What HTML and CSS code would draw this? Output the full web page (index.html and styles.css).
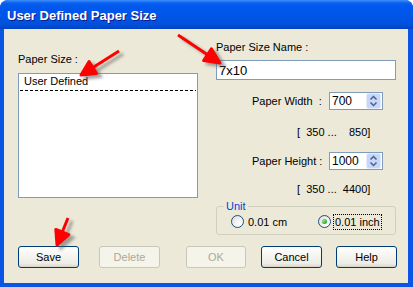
FILE: index.html
```html
<!DOCTYPE html>
<html lang="en">
  <head>
    <meta charset="UTF-8" />
    <title>User Defined Paper Size</title>
    <link rel="stylesheet" href="styles.css">
  </head>
  <body>
    <div class="window">
      <div class="titlebar">
        <span class="title">User Defined Paper Size</span>
      </div>

      <div class="client">
        <div class="panes">
          <!-- Left: list of paper sizes -->
          <div class="left-pane">
            <div class="label">Paper Size :</div>
            <div class="listbox">
              <div class="list-item">User Defined</div>
            </div>
          </div>

          <!-- Right: name, dimensions, unit -->
          <div class="right-pane">
            <div class="label">Paper Size Name :</div>
            <div class="textbox">7x10</div>

            <div class="field-row">
              <span class="field-label">Paper Width&nbsp; :</span>
              <div class="spinbox">
                <span class="spin-value">700</span>
                <svg class="spin-btn" width="15" height="16" viewBox="0 0 15 16">
                  <rect x="0.5" y="0.5" width="14" height="15" rx="2" fill="#c6d6fc" stroke="#e4ecfe" />
                  <path d="M4.5 6.5 L7.5 3.5 L10.5 6.5" fill="none" stroke="#4d6185" stroke-width="1.5" />
                  <path d="M4.5 9.5 L7.5 12.5 L10.5 9.5" fill="none" stroke="#4d6185" stroke-width="1.5" />
                </svg>
              </div>
            </div>
            <div class="range">[  350 ...    850]</div>

            <div class="field-row field-row-second">
              <span class="field-label">Paper Height :</span>
              <div class="spinbox">
                <span class="spin-value">1000</span>
                <svg class="spin-btn" width="15" height="16" viewBox="0 0 15 16">
                  <rect x="0.5" y="0.5" width="14" height="15" rx="2" fill="#c6d6fc" stroke="#e4ecfe" />
                  <path d="M4.5 6.5 L7.5 3.5 L10.5 6.5" fill="none" stroke="#4d6185" stroke-width="1.5" />
                  <path d="M4.5 9.5 L7.5 12.5 L10.5 9.5" fill="none" stroke="#4d6185" stroke-width="1.5" />
                </svg>
              </div>
            </div>
            <div class="range range-second">[  350 ...  4400]</div>

            <fieldset class="unit-group">
              <legend>Unit</legend>
              <div class="radio-row">
                <label class="radio"><span class="radio-circle"></span>0.01 cm</label>
                <label class="radio checked"><span class="radio-circle"></span><span class="focus">0.01 inch</span></label>
              </div>
            </fieldset>
          </div>
        </div>

        <div class="buttons">
          <button class="btn btn-save">Save</button>
          <button class="btn btn-delete" disabled>Delete</button>
          <button class="btn btn-ok" disabled>OK</button>
          <button class="btn btn-cancel">Cancel</button>
          <button class="btn btn-help">Help</button>
        </div>
      </div>

      <!-- Red callout arrows drawn over the dialog -->
      <svg class="arrows" width="413" height="287" viewBox="0 0 413 287">
        <defs>
          <filter id="soft" x="-20%" y="-20%" width="140%" height="140%">
            <feGaussianBlur stdDeviation="1.6" />
          </filter>
          <g id="arrow-shapes">
            <path d="M119 51 L93 67.5" />
            <polygon points="81,75 96.5,73.4 89.1,61.6" />
            <path d="M178 35 L207.5 54.7" />
            <polygon points="220,63 211.4,48.9 203.6,60.5" />
            <path d="M68 218 L62.3 232" />
            <polygon points="57,245 68.8,234.7 55.8,229.5" />
          </g>
        </defs>
        <use href="#arrow-shapes" class="arrow-shadow" transform="translate(4 3)" filter="url(#soft)" />
        <use href="#arrow-shapes" class="arrow-main" />
      </svg>
    </div>
  </body>
</html>
```

FILE: styles.css
```css
body {
  margin: 0;
  background: #fff;
  font-family: "Liberation Sans", Arial, sans-serif;
  font-size: 11px;
  color: #000;
}

.window {
  position: relative;
  width: 413px;
  height: 287px;
  display: flex;
  flex-direction: column;
  background: #0a55e6;
  border-radius: 8px 8px 0 0;
}

.titlebar {
  height: 29px;
  box-sizing: border-box;
  padding: 2px 0 0 7px;
  display: flex;
  align-items: center;
  border-radius: 8px 8px 0 0;
  background: linear-gradient(
    to bottom,
    #3d8ffb 0,
    #0a61ee 3px,
    #0058ee 6px,
    #0055e5 18px,
    #004fd9 25px,
    #0043c2 29px
  );
}
.title {
  color: #fff;
  font-weight: bold;
  font-size: 13px;
  text-shadow: 1px 1px #0d1a8a;
}

.client {
  flex: 1;
  margin: 0 5px 4px 4px;
  padding: 12px 0 0 14px;
  background: #ece9d8;
  display: flex;
  flex-direction: column;
}

.label {
  line-height: 13px;
}

.panes {
  display: flex;
  gap: 18px;
}

.left-pane {
  width: 180px;
  padding-top: 12px;
}
.listbox {
  margin-top: 7px;
  height: 125px;
  box-sizing: border-box;
  border: 1px solid #7f9db9;
  background: #fff;
  padding: 0 1px;
}
.list-item {
  padding: 1px 4px 3px;
  line-height: 13px;
  background: repeating-linear-gradient(to right, #000 0 3px, transparent 3px 5px) bottom / 100% 1px no-repeat;
}

.right-pane {
  width: 180px;
}
.textbox {
  margin-top: 6px;
  height: 20px;
  box-sizing: border-box;
  border: 1px solid #7f9db9;
  background: #fff;
  padding-left: 2px;
  display: flex;
  align-items: center;
  font-size: 13px;
}

.field-row {
  margin-top: 12px;
  height: 18px;
  display: flex;
  align-items: center;
}
.field-row-second {
  margin-top: 13px;
}
.field-label {
  width: 77px;
  margin-left: 36px;
  line-height: 13px;
  white-space: pre;
}
.spinbox {
  width: 54px;
  height: 18px;
  box-sizing: border-box;
  border: 1px solid #7f9db9;
  background: #fff;
  display: flex;
  align-items: center;
  justify-content: space-between;
  padding: 0 1px 0 2px;
  font-size: 12px;
}
.spin-btn {
  display: block;
}

.range {
  margin-top: 16px;
  padding-left: 81px;
  line-height: 13px;
  white-space: pre;
}
.range-second {
  margin-top: 13px;
}

.unit-group {
  margin: 4px 0 0;
  padding: 0 6px 5px 7px;
  border: 1px solid #d0d0bf;
  border-radius: 3px;
}
.unit-group legend {
  padding: 0 2px;
  color: #0046d5;
  line-height: 13px;
}
.radio-row {
  display: grid;
  grid-template-columns: 87px auto;
  margin: 1px 0 0 7px;
}
.radio {
  display: flex;
  align-items: center;
  height: 15px;
}
.radio-circle {
  width: 13px;
  height: 13px;
  box-sizing: border-box;
  border: 1px solid #1c5180;
  border-radius: 50%;
  background: radial-gradient(circle at 70% 70%, #fff 0, #f4f4f0 40%, #d6d6cf 100%);
  margin-right: 4px;
  display: flex;
  align-items: center;
  justify-content: center;
}
.checked .radio-circle::after {
  content: "";
  width: 5px;
  height: 5px;
  border-radius: 50%;
  background: radial-gradient(circle at 35% 35%, #9be29b 0, #31b031 60%, #1d8a1d 100%);
}
.focus {
  outline: 1px dotted #000;
  padding: 1px 1px;
  margin-left: -1px;
}

.buttons {
  margin-top: 11px;
  display: flex;
}
.btn {
  height: 22px;
  width: 61px;
  padding: 0;
  font-family: "Liberation Sans", Arial, sans-serif;
  font-size: 11px;
  font-weight: normal;
  color: #000;
  border: 1px solid #003c74;
  border-radius: 3px;
  background: linear-gradient(to bottom, #fff 0, #f4f3ee 50%, #ecebe4 85%, #d8d2c6 100%);
}
.btn:disabled {
  color: #aca899;
  border-color: #c9c7ba;
  background: #f5f4ea;
}
.btn-delete {
  margin-left: 20px;
}
.btn-ok {
  margin-left: 26px;
  width: 60px;
}
.btn-cancel {
  margin-left: 15px;
}
.btn-help {
  margin-left: 14px;
}

.arrows {
  position: absolute;
  top: 0;
  left: 0;
  pointer-events: none;
}
.arrow-main {
  fill: #ff0000;
  stroke: #ff0000;
  stroke-width: 3;
  stroke-linejoin: round;
}
.arrow-shadow {
  fill: #5a5a5a;
  stroke: #5a5a5a;
  stroke-width: 3;
  opacity: 0.55;
}
```
